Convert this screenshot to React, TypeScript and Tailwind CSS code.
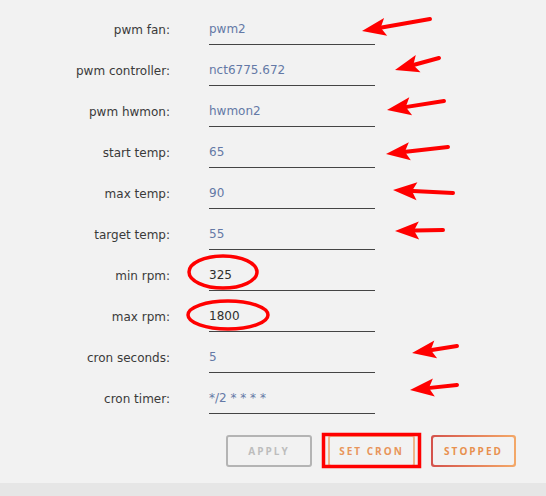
import React from "react";

// ── Fan settings form fields ─────────────────────────────────
const FIELDS = [
  { label: "pwm fan:",        value: "pwm2",        dark: false },
  { label: "pwm controller:", value: "nct6775.672", dark: false },
  { label: "pwm hwmon:",      value: "hwmon2",      dark: false },
  { label: "start temp:",     value: "65",          dark: false },
  { label: "max temp:",       value: "90",          dark: false },
  { label: "target temp:",    value: "55",          dark: false },
  { label: "min rpm:",        value: "325",         dark: true },
  { label: "max rpm:",        value: "1800",        dark: true },
  { label: "cron seconds:",   value: "5",           dark: false },
  { label: "cron timer:",     value: "*/2 * * * *", dark: false },
];

// ── Markup arrows: [tailX, tailY, tipX, tipY] ───────────────
const ARROWS: [number, number, number, number][] = [
  [430, 19, 362, 31],
  [439, 58, 395, 70],
  [444, 101, 387, 110],
  [448, 147, 386, 154],
  [453, 193, 393, 190],
  [443, 230, 395, 231],
  [457, 346, 412, 353],
  [457, 385, 410, 390],
];

function Arrow({ x1, y1, x2, y2 }: { x1: number; y1: number; x2: number; y2: number }) {
  const dx = x2 - x1;
  const dy = y2 - y1;
  const len = Math.hypot(dx, dy);
  const ux = dx / len;
  const uy = dy / len;
  const headLen = 24;
  const headW = 9;
  const bx = x2 - ux * headLen;
  const by = y2 - uy * headLen;
  const px = -uy * headW;
  const py = ux * headW;
  return (
    <g>
      <line x1={x1} y1={y1} x2={bx + ux * 4} y2={by + uy * 4} stroke="#f00" strokeWidth={4} strokeLinecap="round" />
      <polygon points={`${x2},${y2} ${bx + px},${by + py} ${bx + ux * 5},${by + uy * 5} ${bx - px},${by - py}`} fill="#f00" />
    </g>
  );
}

const btnText = "font-['Open_Sans',sans-serif] text-[10px] font-bold tracking-[2px]";

export default function App() {
  return (
    <div className="relative w-[546px] h-[496px] bg-[#f2f2f2] overflow-hidden font-['DejaVu_Sans',sans-serif]">
      {/* ── Form rows ── */}
      <div className="pt-[10px]">
        {FIELDS.map((f) => (
          <div key={f.label} className="flex items-center h-[41px]">
            <div className="w-[170px] text-right text-[12px] leading-[27px] text-[#3a3a3a]">{f.label}</div>
            <div
              className={
                "ml-[39px] w-[166px] h-[28px] leading-[25px] text-[12px] border-b-[1.5px] border-[#444] " +
                (f.dark ? "text-[#2e2e2e]" : "text-[#6479a6]")
              }
            >
              {f.value}
            </div>
          </div>
        ))}
      </div>

      {/* ── Actions ── */}
      <div className="flex justify-end gap-[16px] pr-[30px] mt-[15px]">
        <button className={`w-[86px] h-[32px] rounded-[3px] border-2 border-[#b4b4b4] text-[#bdbdbd] ${btnText}`}>
          APPLY
        </button>
        <button className={`w-[87px] h-[32px] rounded-[3px] border-2 border-[#efb489] text-[#e8955a] ${btnText}`}>
          SET CRON
        </button>
        <button className="w-[85px] h-[32px] rounded-[3px] p-[2px] bg-gradient-to-r from-[#d4524c] to-[#f3a868]">
          <span className={`flex items-center justify-center w-full h-full rounded-[2px] bg-[#f2f2f2] text-[#e8904e] ${btnText}`}>
            STOPPED
          </span>
        </button>
      </div>

      {/* ── Footer strip ── */}
      <div className="absolute left-0 right-0 bottom-0 h-[13px] bg-[#e6e6e6]" />

      {/* ── Red markup layer ── */}
      <svg className="absolute inset-0 pointer-events-none" width={546} height={496}>
        {ARROWS.map(([x1, y1, x2, y2], i) => (
          <Arrow key={i} x1={x1} y1={y1} x2={x2} y2={y2} />
        ))}
        <ellipse cx={223} cy={272} rx={34} ry={16} fill="none" stroke="#f00" strokeWidth={3.5} />
        <ellipse cx={228} cy={315} rx={40} ry={14} fill="none" stroke="#f00" strokeWidth={3.5} />
        <rect x={323.5} y={434.5} width={96} height={32} fill="none" stroke="#f00" strokeWidth={3.5} />
      </svg>
    </div>
  );
}
